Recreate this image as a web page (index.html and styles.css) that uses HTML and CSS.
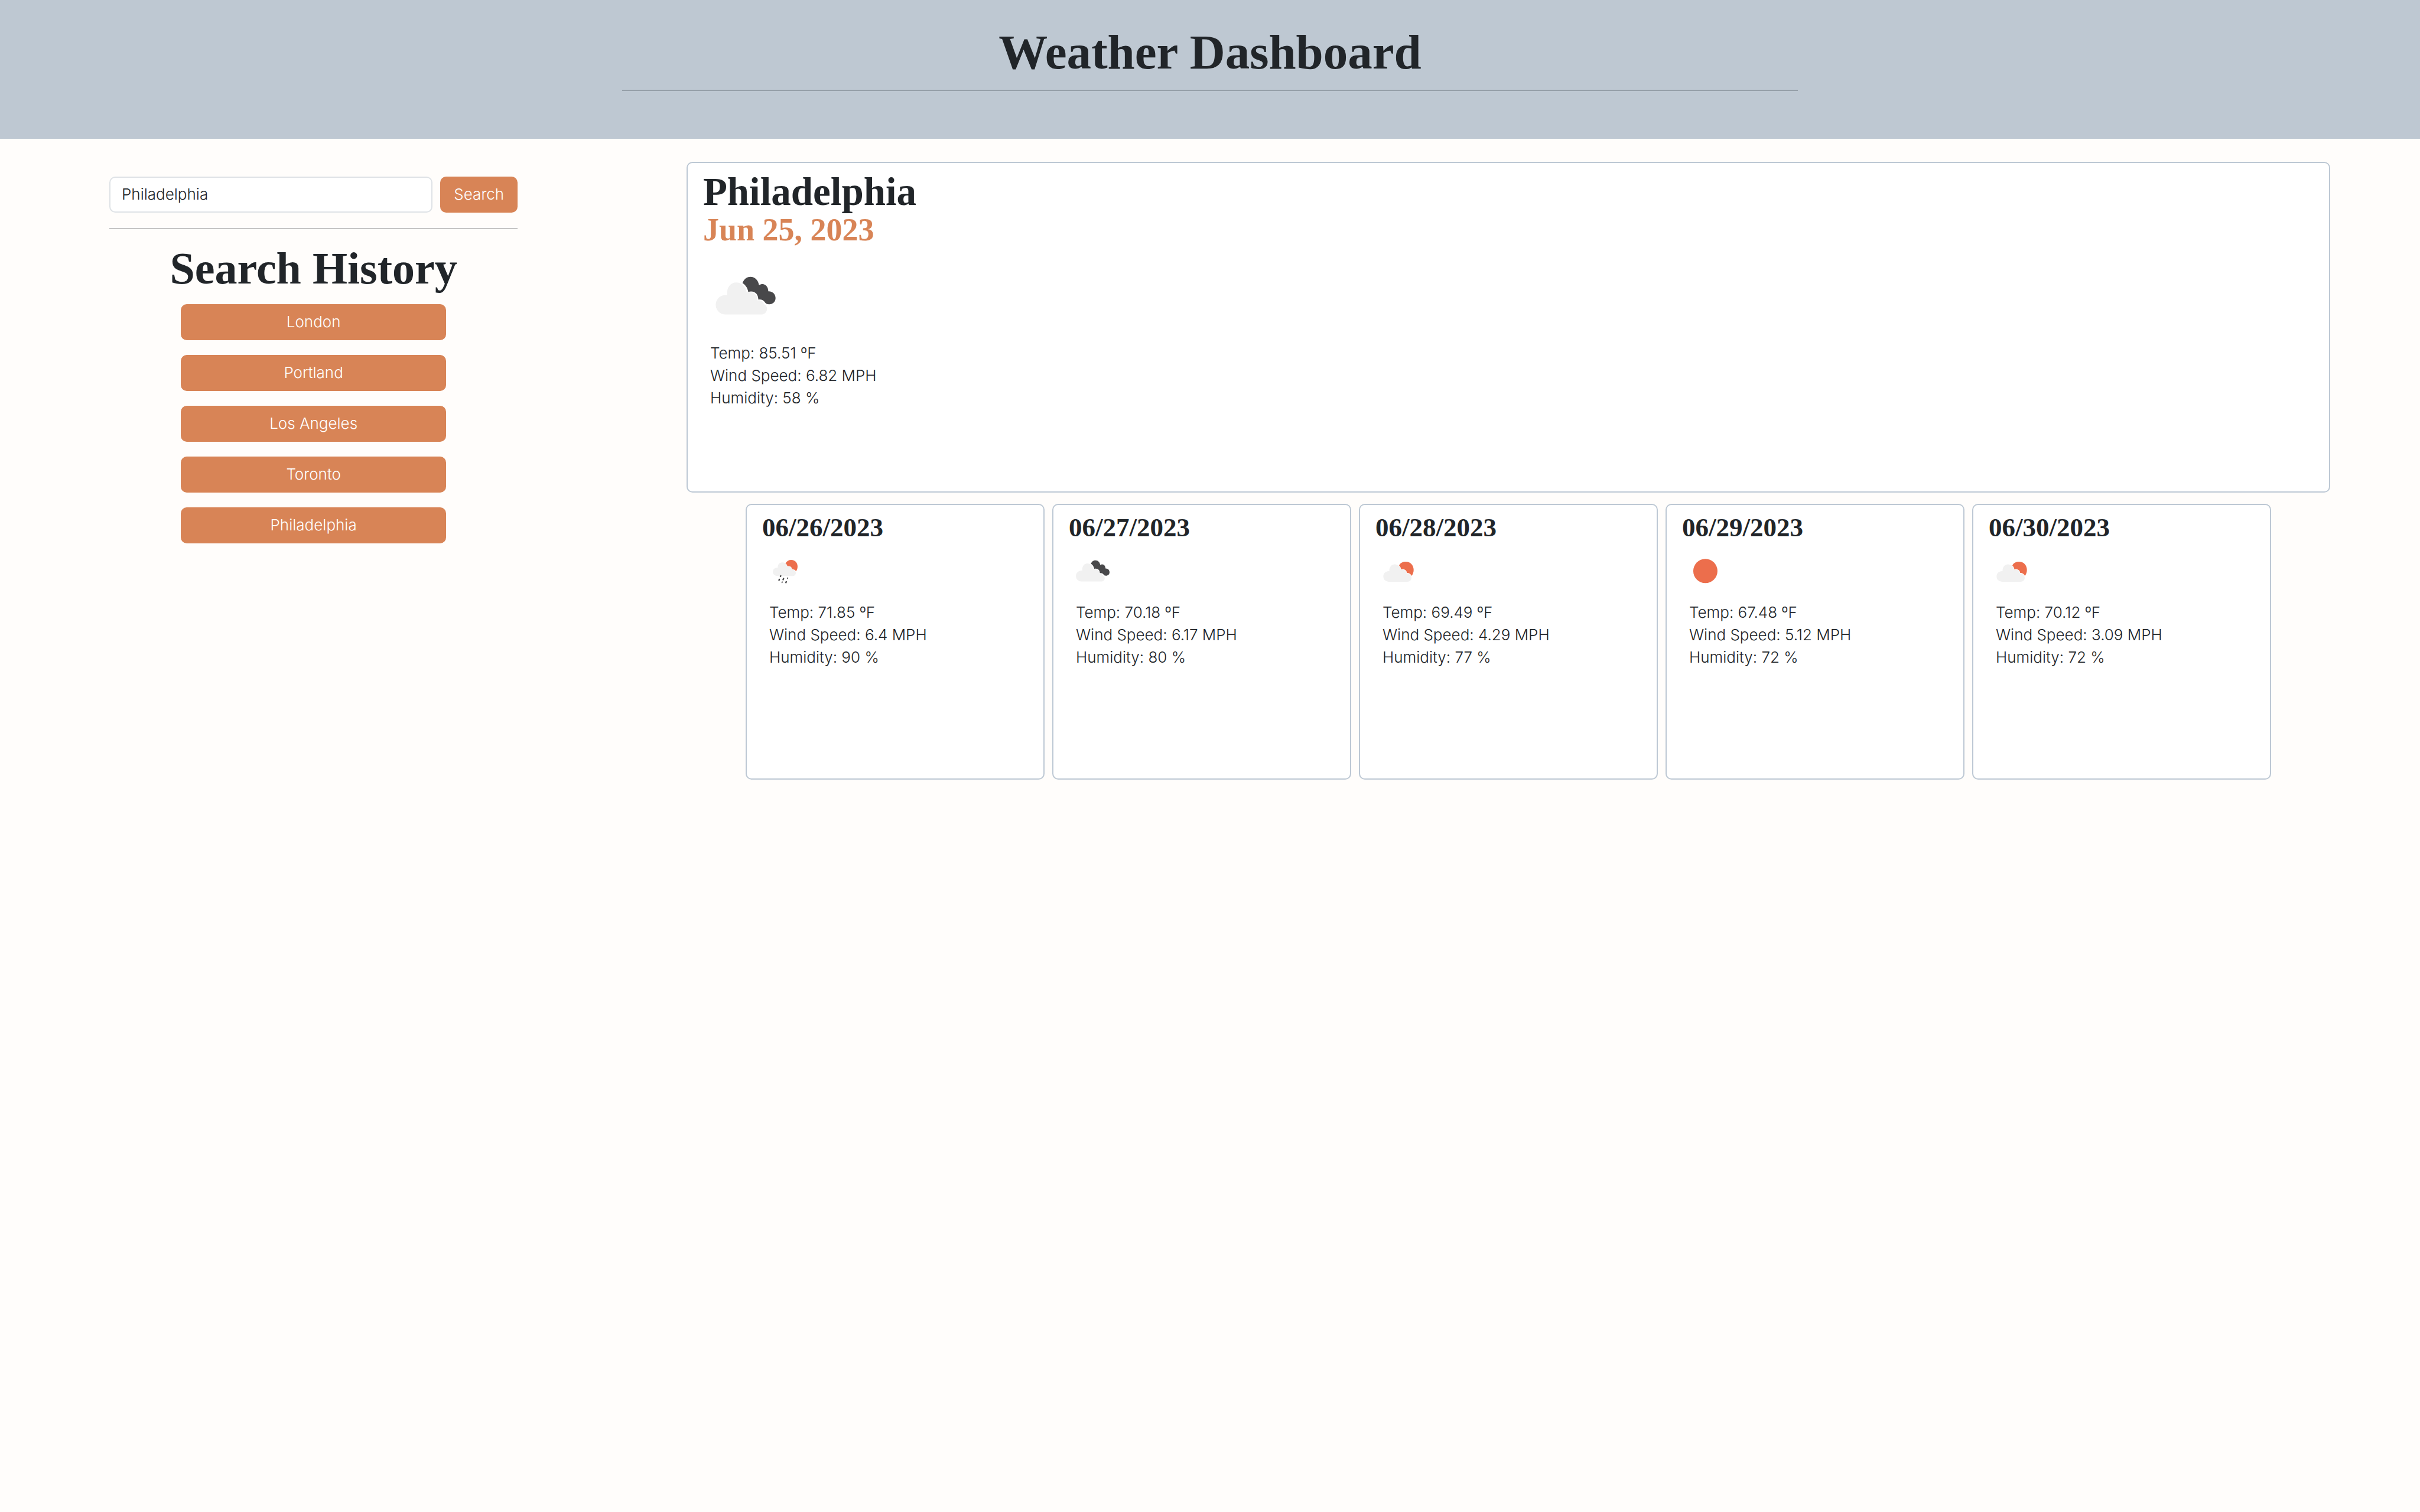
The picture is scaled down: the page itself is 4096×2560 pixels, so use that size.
FILE: index.html
```html
<!DOCTYPE html>
<html lang="en">
<head>
<meta charset="utf-8">
<meta name="viewport" content="width=device-width, initial-scale=1">
<title>Weather Dashboard</title>
<link rel="stylesheet" href="styles.css">
</head>
<body>
<svg class="symbols" aria-hidden="true">
  <symbol id="broken-clouds" viewBox="0 0 540 360">
    <path fill="#48484a" d="M250 117C262 88 280 78 301 78C330 78 350 100 355 130C385 112 414 133 414 170C440 168 460 188 460 212C460 237 442 252 420 252C405 252 397 246 391 237C380 224 368 219 351 222C349 187 329 164 287 173C282 147 270 130 250 117Z"/>
    <path fill="#f1f1f1" d="M145 317A62 62 0 1 1 153 194C148 148 172 113 210 113C245 113 270 139 277 176C315 165 345 190 346 228C365 224 380 233 386 250C400 257 406 268 406 280C406 301 390 317 368 317Z"/>
  </symbol>
  <symbol id="few-clouds" viewBox="33 60 304 203">
    <path fill="#ec6e4c" d="M183 136C193 120 208 113 226 113C255 113 276 136 276 165C276 179 272 191 263 203C257 190 247 184 233 184C231 166 216 157 196 162C195 151 190 143 183 136Z"/>
    <path fill="#f1f1f1" d="M118 240C97 240 83 225 83 207C83 186 99 172 121 173C120 147 135 130 156 130C177 130 192 144 195 165C216 158 231 171 232 190C249 187 262 200 262 215C262 231 250 240 236 240Z"/>
  </symbol>
  <symbol id="rain" viewBox="45 30 304 203">
    <path fill="#ec6e4c" d="M193 92C202 78 214 71 230 71C255 71 270 90 270 112C270 124 268 134 260 144C254 135 247 131 236 132C233 115 222 109 205 111C203 103 199 97 193 92Z"/>
    <path fill="#f1f1f1" d="M144 174C125 174 113 163 113 147C113 130 125 120 144 121C143 101 154 87 172 87C190 87 202 97 205 114C222 108 235 119 236 136C249 133 259 142 259 154C259 166 250 174 238 174Z"/>
    <g stroke="#48484a" stroke-linecap="round" stroke-width="9">
      <path d="M163 173L161 176M154 195L152 201M181 190L178 197M198 210L196 216"/>
      <path stroke-width="6" d="M208 185L206 190M173 211L171 216"/>
    </g>
  </symbol>
  <symbol id="clear-sky" viewBox="0 0 304 203">
    <circle cx="148" cy="112" r="77" fill="#ec6e4c"/>
  </symbol>
</svg>

<header class="page-header">
  <h1>Weather Dashboard</h1>
  <hr>
</header>

<div class="layout">
  <aside class="sidebar">
    <form class="search">
      <input type="text" aria-label="City" value="Philadelphia">
      <button class="btn" type="submit">Search</button>
    </form>
    <hr>
    <h2>Search History</h2>
    <div class="history">
      <button class="btn" type="button">London</button>
      <button class="btn" type="button">Portland</button>
      <button class="btn" type="button">Los Angeles</button>
      <button class="btn" type="button">Toronto</button>
      <button class="btn" type="button">Philadelphia</button>
    </div>
  </aside>

  <main>
    <section class="card current">
      <h2>Philadelphia</h2>
      <h3>Jun 25, 2023</h3>
      <svg class="icon" role="img" aria-label="Broken clouds"><use href="#broken-clouds"/></svg>
      <ul>
        <li>Temp: 85.51 ºF</li>
        <li>Wind Speed: 6.82 MPH</li>
        <li>Humidity: 58 %</li>
      </ul>
    </section>

    <section class="forecast">
      <article class="card">
        <h4>06/26/2023</h4>
        <svg class="icon" role="img" aria-label="Rain"><use href="#rain"/></svg>
        <ul>
          <li>Temp: 71.85 ºF</li>
          <li>Wind Speed: 6.4 MPH</li>
          <li>Humidity: 90 %</li>
        </ul>
      </article>
      <article class="card">
        <h4>06/27/2023</h4>
        <svg class="icon" role="img" aria-label="Broken clouds"><use href="#broken-clouds"/></svg>
        <ul>
          <li>Temp: 70.18 ºF</li>
          <li>Wind Speed: 6.17 MPH</li>
          <li>Humidity: 80 %</li>
        </ul>
      </article>
      <article class="card">
        <h4>06/28/2023</h4>
        <svg class="icon" role="img" aria-label="Few clouds"><use href="#few-clouds"/></svg>
        <ul>
          <li>Temp: 69.49 ºF</li>
          <li>Wind Speed: 4.29 MPH</li>
          <li>Humidity: 77 %</li>
        </ul>
      </article>
      <article class="card">
        <h4>06/29/2023</h4>
        <svg class="icon" role="img" aria-label="Clear sky"><use href="#clear-sky"/></svg>
        <ul>
          <li>Temp: 67.48 ºF</li>
          <li>Wind Speed: 5.12 MPH</li>
          <li>Humidity: 72 %</li>
        </ul>
      </article>
      <article class="card">
        <h4>06/30/2023</h4>
        <svg class="icon" role="img" aria-label="Few clouds"><use href="#few-clouds"/></svg>
        <ul>
          <li>Temp: 70.12 ºF</li>
          <li>Wind Speed: 3.09 MPH</li>
          <li>Humidity: 72 %</li>
        </ul>
      </article>
    </section>
  </main>
</div>
</body>
</html>
```
FILE: styles.css
```css
* {
  box-sizing: border-box;
}

body {
  margin: 0;
  background: #fffdfb;
  color: #212529;
  font: 300 26px/38px Inter, sans-serif;
}

h1, h2, h3, h4 {
  margin: 0;
  font-family: "Liberation Serif", serif;
  font-weight: 700;
}

hr {
  height: 2px;
  margin: 0;
  border: 0;
  background: #c6c5c4;
}

ul {
  margin: 0;
  padding: 0 0 0 12px;
  list-style: none;
}

.symbols {
  display: none;
}

.icon {
  display: block;
}

.page-header {
  padding: 39px 0 81px;
  background: #bec8d2;
  text-align: center;
}

.page-header h1 {
  font-size: 83px;
  line-height: 98px;
}

.page-header hr {
  width: 48.6%;
  margin: 15px auto 0;
  background: #959fa8;
}

.layout {
  display: grid;
  grid-template-columns: 691fr 2781fr;
  align-items: start;
  column-gap: 7.6%;
  padding: 39px 152px 39px 185px;
}

.sidebar {
  padding-top: 25px;
}

.search {
  display: flex;
  gap: 13px;
  margin-bottom: 26px;
}

.search input {
  flex: 1;
  min-width: 0;
  height: 61px;
  padding: 0 19px 2px;
  border: 2px solid #dee2e6;
  border-radius: 10px;
  background: #fff;
  color: inherit;
  font: inherit;
}

.btn {
  min-width: 131px;
  height: 61px;
  padding: 0 20px 2px;
  border: 0;
  border-radius: 10px;
  background: #d88456;
  color: #fff;
  font: inherit;
}

.sidebar h2 {
  margin: 21px 0 15px;
  font-size: 76px;
  line-height: 91px;
  text-align: center;
}

.history {
  display: grid;
  gap: 25px;
  width: 65%;
  margin: 0 auto;
}

.card {
  padding: 11px 26px;
  border: 2px solid #bdc8d4;
  border-radius: 10px;
  background: #fff;
}

.current {
  min-height: 560px;
}

.current h2 {
  font-size: 67px;
  line-height: 74px;
}

.current h3 {
  color: #d88456;
  font-size: 54px;
  line-height: 56px;
}

.current .icon {
  width: 144px;
  height: 96px;
  margin: 31px 0 35px;
}

.forecast {
  display: grid;
  grid-template-columns: repeat(5, 1fr);
  gap: 13px;
  margin-top: 19px;
  padding: 0 100px;
}

.forecast .card {
  min-height: 467px;
}

.forecast h4 {
  font-size: 45px;
  line-height: 55px;
}

.forecast .icon {
  width: 81px;
  height: 54px;
  margin: 16px 0 27px;
}
```
